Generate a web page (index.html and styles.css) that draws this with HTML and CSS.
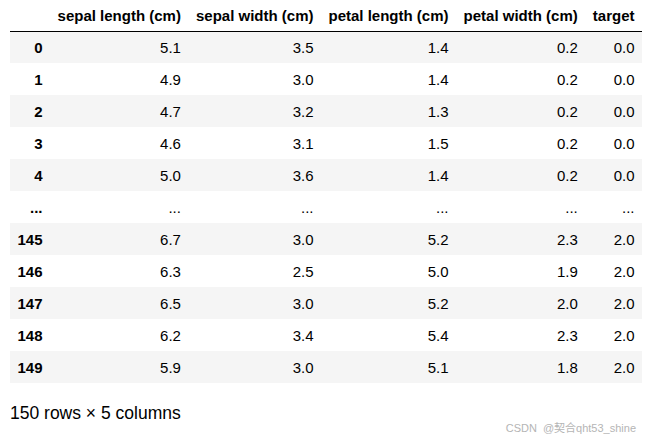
FILE: index.html
```html
<!DOCTYPE html>
<html>
<head>
<meta charset="utf-8">
<link rel="stylesheet" href="styles.css">
</head>
<body>
<div class="output">
  <table class="dataframe">
    <thead>
      <tr>
        <th></th>
        <th>sepal length (cm)</th>
        <th>sepal width (cm)</th>
        <th>petal length (cm)</th>
        <th>petal width (cm)</th>
        <th>target</th>
      </tr>
    </thead>
    <tbody>
      <tr><th>0</th><td>5.1</td><td>3.5</td><td>1.4</td><td>0.2</td><td>0.0</td></tr>
      <tr><th>1</th><td>4.9</td><td>3.0</td><td>1.4</td><td>0.2</td><td>0.0</td></tr>
      <tr><th>2</th><td>4.7</td><td>3.2</td><td>1.3</td><td>0.2</td><td>0.0</td></tr>
      <tr><th>3</th><td>4.6</td><td>3.1</td><td>1.5</td><td>0.2</td><td>0.0</td></tr>
      <tr><th>4</th><td>5.0</td><td>3.6</td><td>1.4</td><td>0.2</td><td>0.0</td></tr>
      <tr><th>...</th><td>...</td><td>...</td><td>...</td><td>...</td><td>...</td></tr>
      <tr><th>145</th><td>6.7</td><td>3.0</td><td>5.2</td><td>2.3</td><td>2.0</td></tr>
      <tr><th>146</th><td>6.3</td><td>2.5</td><td>5.0</td><td>1.9</td><td>2.0</td></tr>
      <tr><th>147</th><td>6.5</td><td>3.0</td><td>5.2</td><td>2.0</td><td>2.0</td></tr>
      <tr><th>148</th><td>6.2</td><td>3.4</td><td>5.4</td><td>2.3</td><td>2.0</td></tr>
      <tr><th>149</th><td>5.9</td><td>3.0</td><td>5.1</td><td>1.8</td><td>2.0</td></tr>
    </tbody>
  </table>
  <p class="shape">150 rows × 5 columns</p>
</div>
<div class="watermark"><span class="wm-brand">CSDN</span><span>@契合qht53_shine</span></div>
</body>
</html>
```

FILE: styles.css
```css
html, body {
  margin: 0;
  padding: 0;
  background: #ffffff;
}

body {
  font-family: "Liberation Sans", Arial, "Noto Sans CJK SC", sans-serif;
  color: #000;
  width: 645px;
  height: 439px;
  overflow: hidden;
  position: relative;
}

.output {
  padding-left: 10px;
}

.dataframe {
  border-collapse: collapse;
  border-spacing: 0;
  font-size: 15px;
  width: 632px;
}

.dataframe th,
.dataframe td {
  padding: 2px 7.5px 0 7.5px;
  text-align: right;
  white-space: nowrap;
  line-height: 16px;
  box-sizing: border-box;
}

.dataframe thead th {
  font-weight: bold;
  height: 31px;
  vertical-align: middle;
  border-bottom: 1px solid #000;
}

.dataframe tbody th {
  font-weight: bold;
}

.dataframe tbody tr {
  height: 32px;
}

.dataframe tbody tr:nth-child(odd) {
  background: #f5f5f5;
}

.shape {
  font-size: 17.5px;
  margin: 20px 0 0 0;
  line-height: 20px;
}

.watermark {
  position: absolute;
  right: 9px;
  bottom: 4px;
  font-size: 11px;
  line-height: 13px;
  color: #b5b5b5;
  display: flex;
  gap: 6px;
}
```
